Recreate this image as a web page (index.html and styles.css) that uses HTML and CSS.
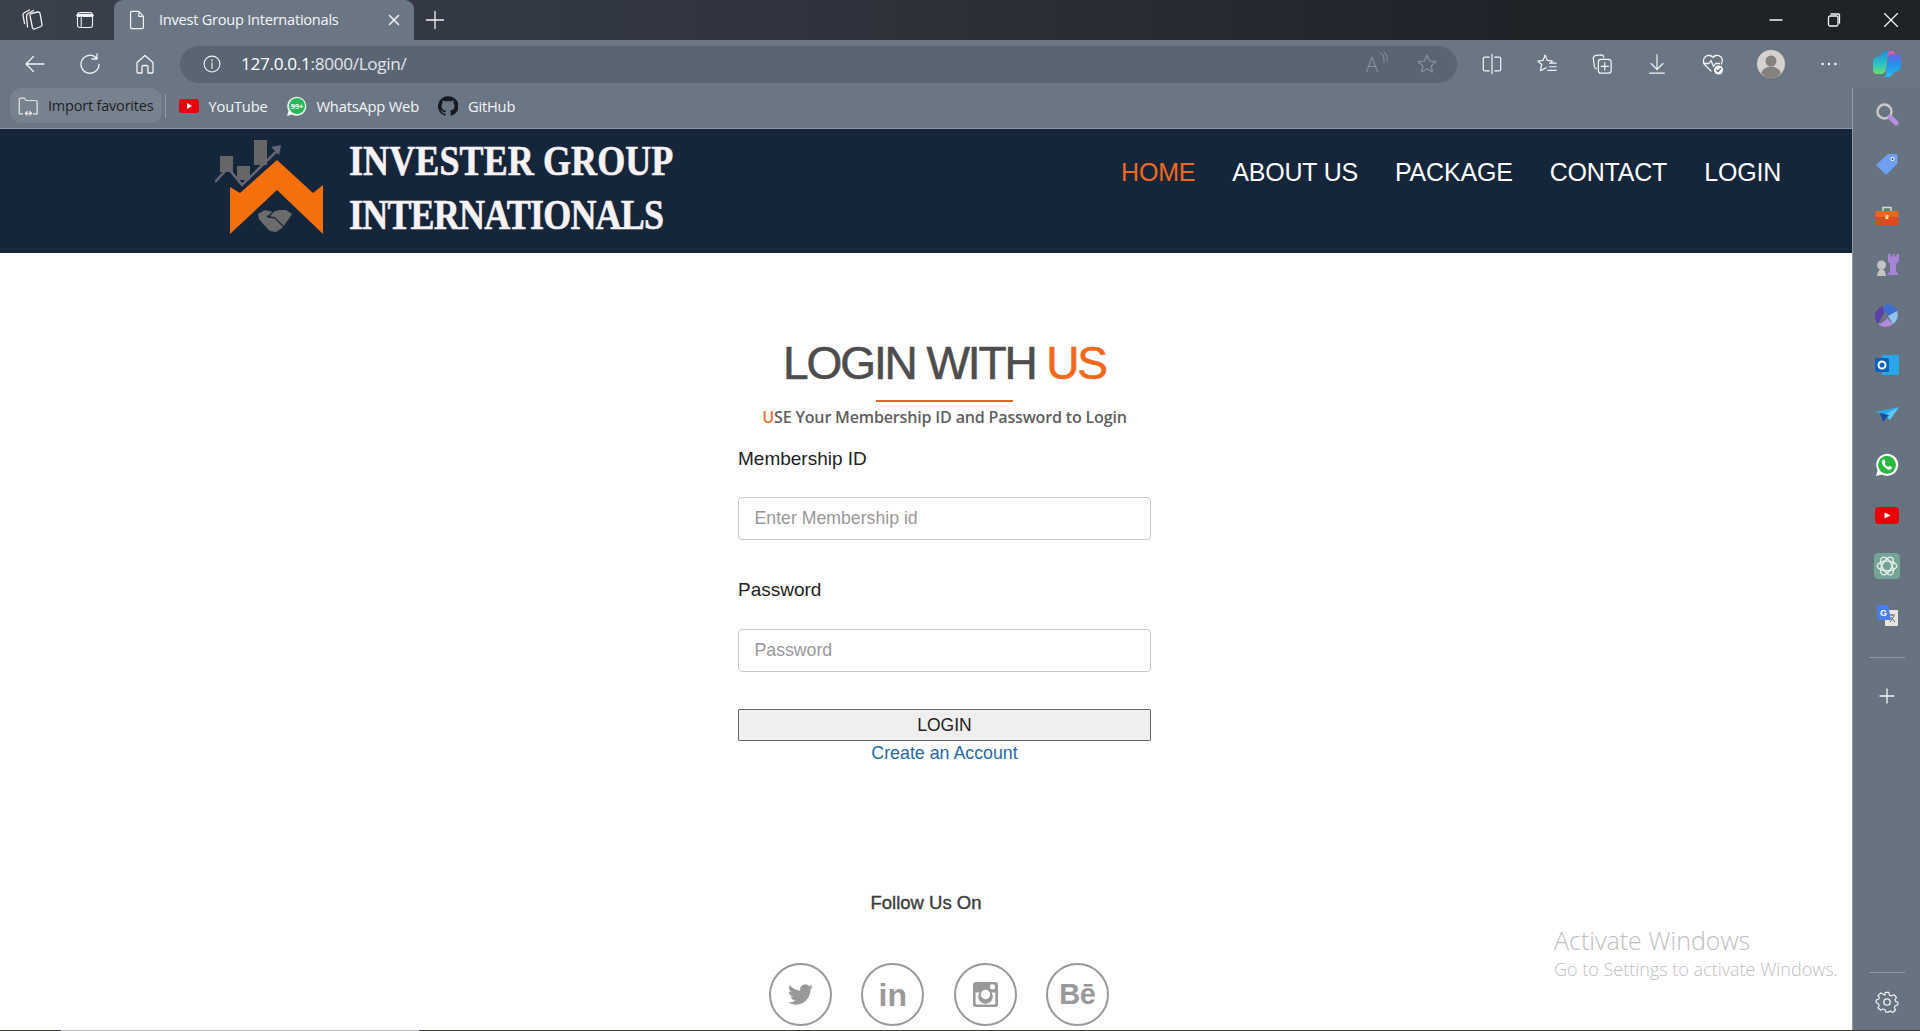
FILE: index.html
```html
<!DOCTYPE html>
<html lang="en">
<head>
<meta charset="utf-8">
<title>Invest Group Internationals</title>
<link rel="stylesheet" href="styles.css">
</head>
<body>
<div class="browser">
  <div class="tabstrip">
    <div class="strip-tools">
      <svg class="ico i24" viewBox="0 0 24 24"><path d="M11 5.500l7-1.500q1.500-.2 2 1.200l2 11.500q.2 1.300-1 1.800l-6.500 2.500q-1.500.3-2-1L10 7.500q-.3-1.600 1-2z"/><path d="M7.500 19 6.500 8q0-1.500 1.500-2.500l5.500-3M4.500 15.500 3 7q0-1.500 1.500-2.500L9.500 2"/></svg>
      <svg class="ico i20" viewBox="0 0 24 24"><rect x="3" y="3" width="18" height="18" rx="3"/><path d="M3.500 6.500h17" stroke-width="4"/><path d="M7.500 8.500v12"/></svg>
    </div>
    <div class="tab">
      <svg class="ico i22" viewBox="0 0 24 24"><path d="M6 2.500h8l5 5.500v12q0 1.500-1.500 1.500h-11Q5 21.500 5 20V4q0-1.500 1-1.500zM14 2.500V8h5"/></svg>
      <span class="tab-title">Invest Group Internationals</span>
      <svg class="ico i14 tab-close" viewBox="0 0 14 14"><path d="M2.500 2.500l9 9M11.500 2.500l-9 9" stroke-width="1.500"/></svg>
    </div>
    <svg class="ico i20 newtab" viewBox="0 0 20 20"><path d="M10 1.500v17M1.500 10h17"/></svg>
    <div class="win">
      <svg class="ico i14" viewBox="0 0 14 14"><path d="M1 7h12"/></svg>
      <svg class="ico i14" viewBox="0 0 14 14"><rect x="1.500" y="3" width="9.500" height="10" rx="1.500"/><path d="M4 1h7.500q1 0 1 1v8"/></svg>
      <svg class="ico i14" viewBox="0 0 14 14"><path d="M.5.500l13 13M13.500.500l-13 13"/></svg>
    </div>
  </div>

  <div class="workspace">
    <div class="left">
      <div class="toolbar">
        <div class="nav-btns">
          <svg class="ico i24" viewBox="0 0 24 24"><path d="M21 12H3M10.500 4.500 3 12l7.500 7.500"/></svg>
          <svg class="ico i24" viewBox="0 0 24 24"><path d="M18.500 6A9 9 0 1 0 21 12.500M19 2v5h-5"/></svg>
          <svg class="ico i24" viewBox="0 0 24 24"><path d="M4 10.500 12 3.500l8 7V20q0 1-1 1h-4v-6q0-1.500-1.500-1.500h-3Q9 13.500 9 15v6H5q-1 0-1-1z"/></svg>
        </div>
        <div class="address">
          <svg class="ico i20" viewBox="0 0 24 24"><circle cx="12" cy="12" r="9.500"/><path d="M12 10.500V17.500M12 6.500v2"/></svg>
          <span class="url">127.0.0.1<span class="url-dim">:8000/Login/</span></span>
          <span class="addr-end">
            <span class="read">A<svg class="ico waves" viewBox="0 0 8 12"><path d="M1 1q4 3 3 9M4 0q4 3 3 9" stroke-width="1"/></svg></span>
            <svg class="ico i22 dim" viewBox="0 0 24 24"><path d="M12 2.500l2.900 6.200 6.600.8-4.900 4.600 1.300 6.700L12 17.500l-5.900 3.300 1.300-6.700L2.500 9.500l6.600-.8z"/></svg>
          </span>
        </div>
        <div class="tools">
          <svg class="ico i22" viewBox="0 0 24 24"><path d="M12 1.500v21M9 4.500H4q-1.500 0-1.500 1.500v12Q2.500 19.500 4 19.500h5M15 4.500h5q1.500 0 1.500 1.500v12q0 1.500-1.500 1.500h-5"/></svg>
          <svg class="ico i22" viewBox="0 0 24 24"><path d="M10 2.500l2.400 5.600 5.600.6-2.500 2.300"/><path d="M10 2.500 7.600 8.100 2 8.700l4.200 3.800-1.200 6.800 6-3.300M15 11h7M15 15h7M13 19h9" /></svg>
          <svg class="ico i22" viewBox="0 0 24 24"><path d="M6 17q-2 0-2.300-2L2.500 6q0-3 3-3.500L11 2q2.500 0 3 2.500"/><rect x="8" y="7" width="14" height="15" rx="3"/><path d="M15 10.500v8M11 14.500h8"/></svg>
          <svg class="ico i22" viewBox="0 0 24 24"><path d="M12 2v16M5.500 11.500 12 18l6.500-6.500M4 22h16"/></svg>
          <svg class="ico i24" viewBox="0 0 24 24"><path d="M10 19 4 13q-2.500-3-1-6.500Q5 2.500 9 3.500q2 .5 3 2 1-1.500 3-2 4-1 6 3 1 3-.5 5.500"/><path d="M2.500 11.500H8l2-3 2.500 6 2-3h4"/><circle cx="17.500" cy="18" r="4.500" fill="#fff" stroke="none"/><path d="M15.500 18l1.500 1.500 2.500-3" stroke="#5b6674"/></svg>
          <svg class="avatar" viewBox="0 0 28 28"><circle cx="14" cy="14" r="14" fill="#d5d2ce"/><circle cx="14" cy="11" r="5.500" fill="#85817d"/><path d="M4 23q3-6.500 10-6.500T24 23q-4 5-10 5T4 23z" fill="#85817d"/></svg>
          <svg class="ico i22" viewBox="0 0 24 24"><circle cx="5" cy="12" r="1.300" fill="#fff" stroke="none"/><circle cx="12" cy="12" r="1.300" fill="#fff" stroke="none"/><circle cx="19" cy="12" r="1.300" fill="#fff" stroke="none"/></svg>
          <svg class="copilot" viewBox="0 0 30 30">
            <defs>
              <linearGradient id="cpA" x1="0" y1="0" x2="0" y2="1"><stop offset="0" stop-color="#1f8fe0"/><stop offset=".6" stop-color="#2fc4c0"/><stop offset="1" stop-color="#6fdc6c"/></linearGradient>
              <linearGradient id="cpB" x1="0" y1="0" x2="0" y2="1"><stop offset="0" stop-color="#6f62e0"/><stop offset=".4" stop-color="#2a8cec"/><stop offset="1" stop-color="#1fc0f0"/></linearGradient>
            </defs>
            <path d="M10 4q1-2 3-2h6q-3 1-3 4l-2 14q-.5 4-4 5H5q-4 0-4-4v-8q0-4 3-5l4-1z" fill="url(#cpA)"/>
            <path d="M20 26q-1 2-3 2h-6q3-1 3-4l2-14q.5-4 4-5h5q4 0 4 4v8q0 4-3 5l-4 1z" fill="url(#cpB)"/>
            <path d="M17 2h3q3 0 3 3h-3q-3 0-4 3l-1 4 1-8z" fill="#d65fb0"/>
          </svg>
        </div>
      </div>

      <div class="bookmarks">
        <div class="bm-import">
          <svg class="ico i22 dark" viewBox="0 0 24 24"><path d="M2.500 20V5q0-1.500 1.500-1.500h4l2 2.500h9.500Q22 6 22 7.500V20M2.500 20.500H6M18 20.500h4M9 20h7M9 20l2-2M9 20l2 2M16 20l-2-2M16 20l-2 2"/></svg>
          <span class="bm-import-text">Import favorites</span>
        </div>
        <span class="bm-sep"></span>
        <div class="bm">
          <svg class="bm-icon" viewBox="0 0 20 20"><rect y="3" width="20" height="14" rx="3" fill="#e8000c"/><path d="M8 7l5 3-5 3z" fill="#fff"/></svg>
          <span>YouTube</span>
        </div>
        <div class="bm">
          <svg class="bm-icon" viewBox="0 0 20 20"><path d="M0 20l1.500-5A9.500 9.500 0 1 1 5 18.500z" fill="#f3f8f3"/><circle cx="10" cy="10" r="8" fill="#27b85a"/><text x="10" y="12.800" class="wa-badge">99+</text></svg>
          <span>WhatsApp Web</span>
        </div>
        <div class="bm">
          <svg class="bm-icon" viewBox="0 0 24 24"><path fill="#16191d" d="M12 .3a12 12 0 0 0-3.800 23.400c.6.100.8-.3.800-.6v-2c-3.300.7-4-1.600-4-1.600-.6-1.400-1.400-1.800-1.400-1.800-1-.7.100-.7.100-.7 1.200.1 1.800 1.200 1.800 1.200 1 1.800 2.800 1.300 3.500 1 .1-.8.400-1.300.8-1.600-2.700-.3-5.500-1.300-5.500-6 0-1.200.5-2.300 1.300-3.100-.2-.4-.6-1.600.1-3.200 0 0 1-.3 3.400 1.200a11.500 11.500 0 0 1 6 0c2.300-1.500 3.300-1.200 3.300-1.200.7 1.600.2 2.800.1 3.200.8.800 1.300 1.900 1.300 3.200 0 4.600-2.800 5.600-5.500 5.900.5.400.9 1.100.9 2.300v3.300c0 .3.200.7.800.6A12 12 0 0 0 12 .3"/></svg>
          <span>GitHub</span>
        </div>
      </div>

      <div class="page">
        <header class="site-header">
          <div class="brand">
            <svg class="logo" viewBox="0 0 108 95">
              <rect x="5" y="16" width="13" height="16" fill="#666"/>
              <rect x="22" y="26" width="13" height="14" fill="#666"/>
              <rect x="39" y="0" width="13" height="25" fill="#666"/>
              <path d="M15 47l10 6 37-33 36 33 10-8v49L62 50 15 94z" fill="#f56f0a"/>
              <path d="M0 42 13 28l14 17L64 9" fill="none" stroke="#667" stroke-width="2.500"/>
              <path d="M56 7l10-2-2 10z" fill="#667"/>
              <path d="M43 74l7-4 8 2 6-2 7 0 6 4-4 6-6 8-6 4-6-1-6-6-5-6z" fill="#6b6b6b"/>
              <path d="M52 76l8 2 8 8M58 72l-5 5 5 1" fill="none" stroke="#15263a" stroke-width="1.200"/>
            </svg>
            <div class="brand-name">
              <span class="brand-line one">INVESTER GROUP</span>
              <span class="brand-line two">INTERNATIONALS</span>
            </div>
          </div>
          <nav class="site-nav">
            <a class="nav-link active">HOME</a>
            <a class="nav-link">ABOUT US</a>
            <a class="nav-link">PACKAGE</a>
            <a class="nav-link">CONTACT</a>
            <a class="nav-link">LOGIN</a>
          </nav>
        </header>

        <main class="login">
          <h1 class="login-title">LOGIN WITH <span class="accent">US</span></h1>
          <div class="login-rule"></div>
          <p class="login-sub"><span class="accent">U</span>SE Your Membership ID and Password to Login</p>
          <label class="field-label">Membership ID</label>
          <input class="field" type="text" placeholder="Enter Membership id">
          <label class="field-label second">Password</label>
          <input class="field" type="password" placeholder="Password">
          <button class="login-btn" type="button">LOGIN</button>
          <a class="create-link">Create an Account</a>
        </main>

        <section class="follow">
          <h2 class="follow-title">Follow Us On</h2>
          <div class="socials">
            <span class="social"><svg class="social-ico" viewBox="0 0 24 24"><path fill="#999" d="M23.953 4.570a10 10 0 01-2.825.775 4.958 4.958 0 002.163-2.723c-.951.555-2.005.959-3.127 1.184a4.920 4.920 0 00-8.384 4.482C7.690 8.095 4.067 6.130 1.640 3.162a4.822 4.822 0 00-.666 2.475c0 1.710.870 3.213 2.188 4.096a4.904 4.904 0 01-2.228-.616v.060a4.923 4.923 0 003.946 4.827 4.996 4.996 0 01-2.212.085 4.936 4.936 0 004.604 3.417 9.867 9.867 0 01-6.102 2.105c-.390 0-.779-.023-1.170-.067a13.995 13.995 0 007.557 2.209c9.053 0 13.998-7.496 13.998-13.985 0-.210 0-.420-.015-.630A9.935 9.935 0 0024 4.590z"/></svg></span>
            <span class="social social-text">in</span>
            <span class="social"><svg class="social-ico" viewBox="0 0 24 24"><path fill="#999" fill-rule="evenodd" d="M3 0h18q3 0 3 3v18q0 3-3 3H3q-3 0-3-3V3q0-3 3-3zM2.500 10v10.500q0 1 1 1h17q1 0 1-1V10h-3.700a7 7 0 1 1-11.600 0zM12 7.500a4.500 4.500 0 1 0 0 9 4.500 4.500 0 0 0 0-9zM17.500 2.500q-1 0-1 1V6q0 1 1 1h2.500q1 0 1-1V3.500q0-1-1-1z"/></svg></span>
            <span class="social social-text be">Bē</span>
          </div>
        </section>
      </div>
    </div>

    <aside class="sidebar">
      <div class="side-apps">
        <span class="side-item"><svg class="side-ico" viewBox="0 0 24 24"><circle cx="9.500" cy="9.500" r="7" fill="none" stroke="#c9c9c9" stroke-width="2.500"/><path d="M15 15l6 6" stroke="#b48fdc" stroke-width="5" stroke-linecap="round"/></svg></span>
        <span class="side-item"><svg class="side-ico" viewBox="0 0 24 24"><path d="M13 2h8q1.500 0 1.500 1.500v8L12 22q-1 1-2 0L2 14q-1-1 0-2z" fill="#6f9ff0"/><circle cx="17.500" cy="7" r="2" fill="#fff"/><circle cx="17.500" cy="7" r="1" fill="#335"/></svg></span>
        <span class="side-item shift-down"><svg class="side-ico" viewBox="0 0 24 24"><path d="M8 7V3.500h8V7" fill="none" stroke="#d9d9d9" stroke-width="1.500"/><path d="M1 7h22l1 6H0z" fill="#f4631e"/><path d="M.5 14h23v7H.5z" fill="#dd4d13"/><rect x="10.500" y="11" width="3" height="4" fill="#ffd2b0"/></svg></span>
        <span class="side-item"><svg class="side-ico" viewBox="0 0 24 24"><path d="M13 1h2.500v2.500h2V1h2v2.500h2V1H24v7l-3 3v7l3 4H12l3-4v-7l-2-3z" fill="#a884d6"/><circle cx="6.500" cy="12" r="4.500" fill="#c4c4c4"/><path d="M2 23q1-7 4.500-7t4.500 7z" fill="#c4c4c4"/></svg></span>
        <span class="side-item"><svg class="side-ico" viewBox="0 0 24 24"><path d="M12 1a11 11 0 0 1 10 7l-8 5-2-3-4-1q0-6 4-8z" fill="#3a6fd0"/><path d="M22 8a11 11 0 0 1-4 13l-5-8z" fill="#8fc4ee"/><path d="M18 21a11 11 0 0 1-15 0q6-1 9-6z" fill="#b28be0"/><path d="M3 21A11 11 0 0 1 8 3l1 7z" fill="#5d3fa8"/></svg></span>
        <span class="side-item"><svg class="side-ico" viewBox="0 0 24 24"><rect x="7" y="2" width="17" height="20" rx="1.500" fill="#28a8ea"/><rect x="0" y="5" width="14" height="14" rx="1.500" fill="#0a62b8"/><circle cx="7" cy="12" r="3.500" fill="none" stroke="#fff" stroke-width="1.900"/></svg></span>
        <span class="side-item"><svg class="side-ico" viewBox="0 0 24 24"><path d="M0 9l24-5-10 8z" fill="#2aa9f0"/><path d="M9 12l15-8-9 13z" fill="#5cc8f8"/><path d="M5 10l9 2-6 7z" fill="#14509c"/></svg></span>
        <span class="side-item"><svg class="side-ico" viewBox="0 0 24 24"><path fill="#fff" d="M1 23l1.600-5.800A11 11 0 1 1 6.900 21.500z"/><circle cx="12" cy="11.800" r="9" fill="#2bb741"/><path fill="#fff" d="M8.500 6.500q-1 0-1.500 1.500c-.5 2 .5 4 2.500 6s4 3 6 2.500q1.500-.5 1.500-1.800l-.1-.7-2.400-1.200-1.200 1.300c-1.500-.5-3-2-3.600-3.600l1-1.200-1-2.600z"/></svg></span>
        <span class="side-item"><svg class="side-ico" viewBox="0 0 24 24"><rect x="0" y="3" width="24" height="17" rx="3.500" fill="#ea0008"/><path d="M9.500 8.500l6 3-6 3z" fill="#fff"/></svg></span>
        <span class="side-item"><svg class="side-ico large" viewBox="0 0 24 24"><rect width="24" height="24" rx="4" fill="#74a495"/><g fill="none" stroke="#eaf3f0" stroke-width="1.200"><ellipse cx="12" cy="12" rx="9" ry="4.500"/><ellipse cx="12" cy="12" rx="9" ry="4.500" transform="rotate(60 12 12)"/><ellipse cx="12" cy="12" rx="9" ry="4.500" transform="rotate(120 12 12)"/></g></svg></span>
        <span class="side-item"><svg class="side-ico" viewBox="0 0 24 24"><rect x="10" y="6" width="13" height="16" rx="1" fill="#e8e4df"/><path d="M14 11h6M17 10v2M15 18l4-6M16 13l4 5" stroke="#667" fill="none"/><path d="M2 1h11l3 15H4q-2 0-2-2z" fill="#4a7fe8"/><text x="8.500" y="12" class="gt-letter">G</text></svg></span>
      </div>
      <div class="side-rule"></div>
      <svg class="ico i20 side-plus" viewBox="0 0 20 20"><path d="M10 3v14M3 10h14"/></svg>
      <div class="side-spacer"></div>
      <div class="side-rule"></div>
      <svg class="ico i24 side-gear" viewBox="0 0 24 24"><path d="M10 2h4l.7 3 2.300 1 2.700-1.500 2.800 3-1.500 2.500.5 2 2.700 1-.2 3-2.800.8-1 2.200 1.300 2.500-3 2.800-2.500-1.500-2.200.8L13.500 24h-3l-.8-2.800-2.200-.8L5 21.800l-3-2.800 1.300-2.500-1-2.200-2.300-.8v-3l2.800-1 .7-2L2 5.500l3-3 2.700 1.500L9.700 5z" transform="translate(1.200 .6) scale(.9)"/><circle cx="12" cy="12" r="3.200"/></svg>
    </aside>
  </div>

  <div class="activate">
    <div class="activate-title">Activate Windows</div>
    <div class="activate-sub">Go to Settings to activate Windows.</div>
  </div>
  <div class="taskline"><span class="taskline-light"></span></div>
</div>
</body>
</html>
```

FILE: styles.css
```css
* { box-sizing: border-box; }
html, body { margin: 0; padding: 0; height: 100%; overflow: hidden; }
body { font-family: "Liberation Sans", Arial, sans-serif; background: #fff; }

.browser { position: relative; width: 1920px; height: 1031px; display: flex; flex-direction: column; overflow: hidden; }

.ico { fill: none; stroke: #f2f4f6; stroke-width: 1.300; stroke-linecap: round; stroke-linejoin: round; flex: none; display: block; }
.i14 { width: 14px; height: 14px; }
.i20 { width: 20px; height: 20px; }
.i22 { width: 22px; height: 22px; }
.i24 { width: 24px; height: 24px; }
.ico.dim { stroke: #8a94a1; }
.ico.dark { stroke: #e4e7ea; }

/* tab strip */
.tabstrip { height: 40px; flex: none; display: flex; align-items: flex-end; background: linear-gradient(90deg, #3a404c 0%, #2f343e 40%, #1f2227 80%, #1e2125 100%); }
.strip-tools { width: 114px; height: 40px; padding: 0 19px 0 20px; display: flex; align-items: center; justify-content: space-between; }
.tab { width: 300px; height: 40px; padding: 0 14px 0 12px; display: flex; align-items: center; background: #6b7684; border-radius: 9px 9px 0 0; }
.tab-title { margin: -2px 0 0 11px; flex: 1; font: 14.600px/20px "Open Sans", sans-serif; letter-spacing: -.25px; color: #f6f7f8; white-space: nowrap; }
.tab-close { margin-right: -1px; }
.newtab { margin: 0 0 10px 11px; }
.win { margin-left: auto; width: 162px; height: 40px; padding: 0 22px 0 11px; display: flex; align-items: center; justify-content: space-between; }

/* toolbar */
.workspace { flex: 1; min-height: 0; display: flex; }
.left { width: 1852px; flex: none; display: flex; flex-direction: column; }
.toolbar { width: 1920px; height: 48px; flex: none; display: flex; align-items: center; background: #6b7684; }
.nav-btns { width: 180px; padding: 0 23px; display: flex; align-items: center; justify-content: space-between; }
.address { width: 1277px; height: 37px; padding: 0 19px 0 22px; display: flex; align-items: center; background: #5a6573; border-radius: 19px; }
.url { margin: -1px 0 0 19px; font: 17.200px/22px "Open Sans", sans-serif; letter-spacing: -.33px; color: #fff; }
.url-dim { color: #e2e5e9; }
.addr-end { margin-left: auto; display: flex; align-items: center; gap: 26px; }
.read { position: relative; width: 24px; font: 300 20px "Open Sans", sans-serif; color: #8a94a1; }
.waves { position: absolute; top: 1px; left: 14px; width: 8px; height: 12px; stroke: #8a94a1; }
.tools { width: 463px; padding: 0 0 0 24px; display: flex; align-items: center; gap: 33px; }
.avatar { width: 28px; height: 28px; flex: none; margin-left: -1px; }
.copilot { width: 30px; height: 30px; flex: none; margin-left: -1px; }

/* bookmarks */
.bookmarks { height: 41px; flex: none; display: flex; align-items: flex-start; padding-left: 10px; background: #6b7684; border-bottom: 1px solid #8f99a5; }
.bm-import { width: 152px; height: 35px; padding: 0 4px 0 7px; display: flex; align-items: center; background: #78828f; border-radius: 12px; }
.bm-import-text { margin-left: 9px; font: 14.500px "Open Sans", sans-serif; letter-spacing: -.2px; color: #1e2226; white-space: nowrap; }
.bm-sep { width: 1px; height: 24px; margin: 6px 13px 0 3px; background: #8f99a5; }
.bm { height: 35px; display: flex; align-items: center; margin-right: 19.500px; font: 14.700px "Open Sans", sans-serif; letter-spacing: -.2px; color: #f4f5f7; }
.bm-icon { width: 20px; height: 20px; margin-right: 9.500px; flex: none; }
.wa-badge { font: bold 7.500px "Open Sans", sans-serif; fill: #fff; text-anchor: middle; }

/* site */
.page { flex: 1; min-height: 0; background: #fff; }
.site-header { height: 124px; padding: 11px 71px 0 215px; display: flex; align-items: flex-start; justify-content: space-between; background: #15263a; }
.brand { display: flex; align-items: flex-start; }
.logo { width: 108px; height: 95px; flex: none; }
.brand-name { margin: -1px 0 0 26px; display: flex; flex-direction: column; gap: 16.500px; }
.brand-line { display: block; height: 37px; font: bold 36px/37px "Liberation Serif", serif; color: #f7f2f4; white-space: nowrap; transform: scaleY(1.200); transform-origin: top left; -webkit-text-stroke: .5px #f7f2f4; }
.brand-line.one { letter-spacing: .1px; }
.brand-line.two { letter-spacing: -.8px; }
.site-nav { display: flex; gap: 37px; margin-top: 17px; }
.nav-link { font-size: 25px; line-height: 30px; color: #fff; letter-spacing: -.2px; }
.nav-link.active { color: #f2691e; }

.login { width: 413px; margin-left: 738px; display: flex; flex-direction: column; align-items: stretch; padding-top: 84px; }
.login-title { margin: 0; font-size: 46px; line-height: 52px; font-weight: normal; letter-spacing: -2.100px; text-align: center; color: #4d4d4d; -webkit-text-stroke: .6px currentColor; }
.accent { color: #f2691e; }
.login-rule { width: 137px; height: 2px; margin: 11px auto 0; background: #e2692a; }
.login-sub { margin: 5px 0 0; font: 600 16.100px/20px "Open Sans", sans-serif; letter-spacing: -.2px; color: #5f5f5f; text-align: center; }
.login-sub .accent { color: #e2763c; }
.field-label { display: block; margin-top: 20px; font-size: 19px; line-height: 24px; color: #222; }
.field-label.second { margin-top: 38px; margin-bottom: 1px; }
.field { display: block; width: 100%; height: 43px; margin-top: 26px; padding: 0 15.500px; font: 17.700px "Liberation Sans", Arial, sans-serif; color: #555; background: #fff; border: 1px solid #c8c8c8; border-radius: 4px; outline: none; }
.field::placeholder { color: #999; opacity: 1; }
.login-btn { display: block; width: 100%; height: 32px; margin-top: 37px; padding: 0; font: 17.500px "Liberation Sans", Arial, sans-serif; color: #222; background: #efefef; border: 1px solid #666; border-radius: 1px; }
.create-link { display: block; margin-top: 0; font-size: 17.800px; line-height: 24px; color: #1f6aa5; text-align: center; }

.follow { margin-top: 126px; display: flex; flex-direction: column; }
.follow-title { margin: 0; font-size: 18.500px; line-height: 24px; font-weight: normal; text-align: center; color: #3d3d3d; -webkit-text-stroke: .4px currentColor; }
.socials { margin: 48px 0 0 769px; display: flex; gap: 29.300px; }
.social { width: 63px; height: 63px; flex: none; display: flex; align-items: center; justify-content: center; border: 2px solid #999; border-radius: 50%; }
.social-ico { width: 25px; height: 25px; }
.social-text { font-size: 32px; line-height: 1; font-weight: bold; color: #999; }
.be { font-size: 29px; letter-spacing: -.5px; }

/* sidebar */
.sidebar { width: 68px; flex: none; margin-top: 48px; display: flex; flex-direction: column; align-items: center; background: #687382; border-left: 1px solid #8f99a5; }
.side-apps { display: grid; grid-auto-rows: 50.200px; margin-top: 1px; }
.side-item { display: flex; align-items: center; justify-content: center; }
.shift-down { padding-top: 4px; }
.side-ico { width: 24px; height: 24px; display: block; }
.side-ico.large { width: 26px; height: 26px; }
.gt-letter { font: bold 9px "Liberation Sans", sans-serif; fill: #fff; text-anchor: middle; }
.side-rule { width: 36px; height: 1px; margin-top: 16px; background: #8f99a5; flex: none; }
.side-plus { margin-top: 28px; }
.side-spacer { flex: 1; }
.side-gear { margin-top: 17px; margin-bottom: 17px; }

/* overlays */
.activate { position: absolute; left: 1554px; top: 924px; font-family: "Open Sans", sans-serif; font-weight: 300; color: #bfbfbf; }
.activate-title { font-size: 25px; line-height: 32px; }
.activate-sub { font-size: 18px; line-height: 26px; }
.taskline { position: absolute; left: 0; right: 0; bottom: 0; height: 1px; background: #3f3f35; }
.taskline-light { position: absolute; left: 61px; top: 0; width: 358px; height: 1px; background: #b9b9b9; }
```
